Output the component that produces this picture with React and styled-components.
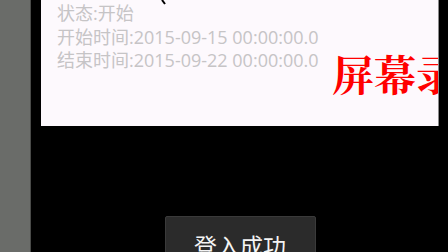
import React from "react";
import styled, { createGlobalStyle } from "styled-components";

const GlobalStyle = createGlobalStyle`
  html, body {
    margin: 0;
    padding: 0;
    background: #000;
  }
`;

const Screen = styled.div`
  width: 448px;
  height: 252px;
  display: flex;
  overflow: hidden;
  background: #000;
  font-family: "Open Sans", "Noto Sans CJK SC", sans-serif;
`;

const SideBar = styled.div`
  width: 30px;
  flex-shrink: 0;
  background: #6a6c69;
  border-right: 1px solid #4a4b49;
  margin-right: 10px;
`;

const Content = styled.div`
  width: 398px;
  height: 252px;
  display: flex;
  flex-direction: column;
  flex-shrink: 0;
`;

const Panel = styled.div`
  position: relative;
  flex-shrink: 0;
  height: 126px;
  background: #fdf9fd;
  border-right: 1px solid #8a8a8a;
  overflow: hidden;
  padding: 2px 0 0 16px;
  box-sizing: border-box;
`;

const InfoLine = styled.div`
  font-size: 18px;
  line-height: 23.5px;
  color: #c6c4c6;
  white-space: nowrap;
`;

const Watermark = styled.div`
  position: absolute;
  left: 291px;
  top: 52px;
  font-family: "Noto Serif CJK SC", "Noto Sans CJK SC", serif;
  font-weight: 700;
  font-size: 42px;
  line-height: 1;
  color: #ff0000;
  white-space: nowrap;
`;

const Cursor = styled.svg`
  position: absolute;
  left: 120px;
  top: 0;
`;

const Bottom = styled.div`
  flex: 1;
  min-height: 0;
  display: flex;
  justify-content: center;
  padding-top: 90px;
`;

const Toast = styled.div`
  width: 151px;
  height: 48px;
  flex-shrink: 0;
  box-sizing: border-box;
  background: #2b2b2b;
  border: 1px solid #3a3a3a;
  border-radius: 2px;
  padding-top: 15px;
  text-align: center;
  color: #f4f4f4;
  font-size: 23px;
  line-height: 26px;
  font-family: "Noto Sans CJK SC", sans-serif;
`;

export default function App() {
  return (
    <>
      <GlobalStyle />
      <Screen>
        <SideBar />
        <Content>
          <Panel>
            <Cursor width="6" height="6" viewBox="0 0 6 6">
              <path d="M1 0 L4 4" stroke="#000" strokeWidth="2" />
            </Cursor>
            <InfoLine>状态:开始</InfoLine>
            <InfoLine>开始时间:2015-09-15 00:00:00.0</InfoLine>
            <InfoLine>结束时间:2015-09-22 00:00:00.0</InfoLine>
            <Watermark>屏幕录</Watermark>
          </Panel>
          <Bottom>
            <Toast>登入成功</Toast>
          </Bottom>
        </Content>
      </Screen>
    </>
  );
}
